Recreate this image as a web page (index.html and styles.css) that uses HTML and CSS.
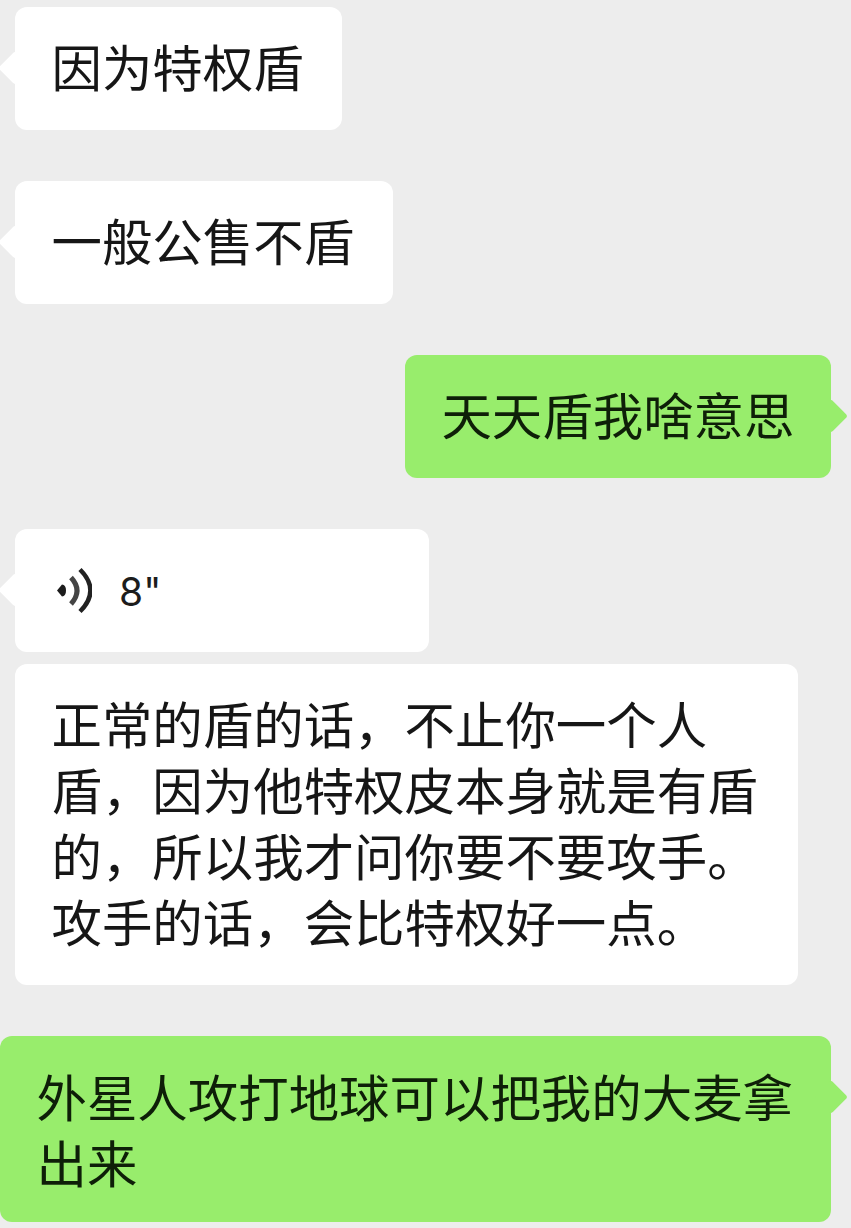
FILE: index.html

```html
<!DOCTYPE html>
<html lang="zh-CN">
<head>
  <title>聊天记录</title>
  <meta charset="UTF-8">
  <link rel="stylesheet" href="styles.css">
</head>
<body>
  <div class="chat">
    <div class="msg from-them">
      <div class="bubble">因为特权盾</div>
    </div>
    <div class="msg from-them">
      <div class="bubble">一般公售不盾</div>
    </div>
    <div class="msg from-me">
      <div class="bubble">天天盾我啥意思</div>
    </div>
    <div class="msg from-them voice-msg">
      <div class="bubble voice">
        <svg class="voice-icon" width="36" height="48" viewBox="0 0 36 48" aria-hidden="true">
          <path class="wave-dot" d="M1 24.500 L6 18.500 Q10 19 10 24.500 Q10 30 6 30.500 Z"/>
          <path class="wave-mid" d="M15 11.500 Q27 24.500 15 38"/>
          <path class="wave-outer" d="M24 3.500 Q45 24.500 24 45.500"/>
        </svg>
        <span class="voice-time">8"</span>
      </div>
    </div>
    <div class="msg from-them">
      <div class="bubble long">正常的盾的话，不止你一个人盾，因为他特权皮本身就是有盾的，所以我才问你要不要攻手。攻手的话，会比特权好一点。</div>
    </div>
    <div class="msg from-me">
      <div class="bubble last">外星人攻打地球可以把我的大麦拿出来</div>
    </div>
  </div>
</body>
</html>
```

FILE: styles.css

```css
:root {
  --background: #ededed;
  --bubble: #ffffff;
  --bubble-me: #98ed6c;
  --text: #161616;
  --text-me: #0e1f08;
}

html, body {
  margin: 0;
  height: 100%;
  background-color: var(--background);
}

body {
  font-family: "Noto Sans CJK SC", "Liberation Sans", sans-serif;
  font-size: 50.45px;
  line-height: 66px;
  color: var(--text);
  overflow: hidden;
}

.chat {
  display: flex;
  flex-direction: column;
  gap: 51px;
  padding: 7px 20px 0 0;
}

.msg {
  display: flex;
}

.from-them {
  justify-content: flex-start;
  margin-left: 15px;
}

.from-me {
  justify-content: flex-end;
}

.voice-msg {
  margin-bottom: -39px;
}

.bubble {
  position: relative;
  padding: 25px 38.5px 32px 36.5px;
  border-radius: 12px;
  background-color: var(--bubble);
}

.bubble:before {
  content: "";
  position: absolute;
  top: 49px;
  width: 24px;
  height: 24px;
  border-radius: 3px;
  background-color: inherit;
  transform: rotate(45deg);
}

.from-them .bubble:before {
  left: -12px;
}

.from-me .bubble {
  padding-right: 36.5px;
  background-color: var(--bubble-me);
  color: var(--text-me);
}

.from-me .bubble:before {
  right: -12px;
}

.voice {
  display: flex;
  align-items: center;
  gap: 27px;
  width: 414px;
  box-sizing: border-box;
  height: 123px;
  padding: 0 0 0 41px;
}

.voice-icon {
  flex: none;
  display: block;
  margin-top: -1px;
}

.wave-dot {
  fill: #1c1c1c;
}

.wave-mid,
.wave-outer {
  fill: none;
  stroke: #222222;
  stroke-width: 4.500px;
}

.wave-mid {
  stroke: #444444;
  stroke-width: 5px;
}

.voice-time {
  margin-top: 2px;
  font-family: "Inter", "Liberation Sans", sans-serif;
  font-size: 39px;
  line-height: 46px;
  color: #1c1c1c;
}

.long {
  width: 783px;
  box-sizing: border-box;
}

/* no tail when it follows the voice bubble */
.long:before {
  display: none;
}

.from-me .last {
  width: 831px;
  box-sizing: border-box;
  padding-top: 26px;
  padding-bottom: 28px;
}
```
